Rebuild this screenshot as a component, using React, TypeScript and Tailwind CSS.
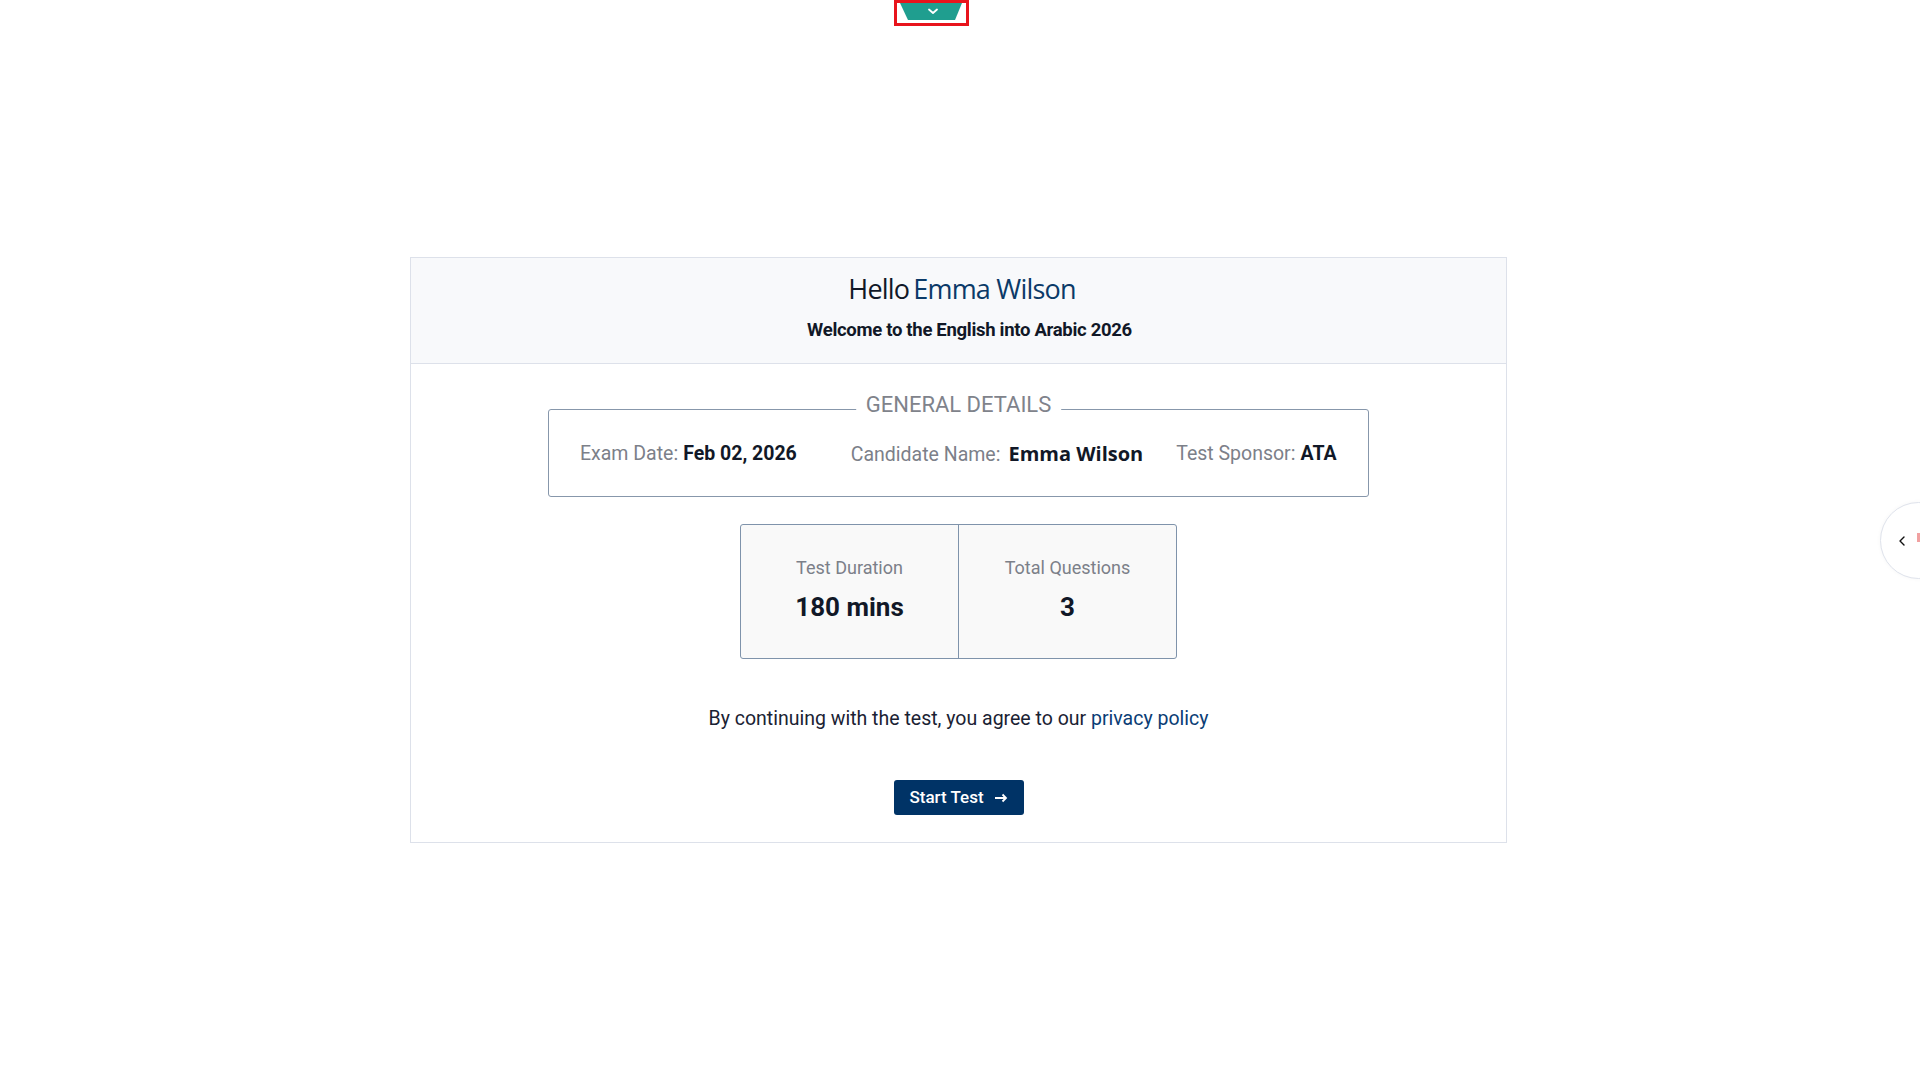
import React from "react";

export default function App() {
  return (
    <div className="relative min-h-[1077px] w-full bg-white" style={{ fontFamily: "Roboto, 'Liberation Sans', sans-serif" }}>
      {/* Top pull tab */}
      <div className="absolute left-[894px] top-0 h-[26px] w-[75px] border-[3px] border-[#e8141c]">
        <svg width="69" height="20" viewBox="0 0 69 20" className="absolute left-0 top-0">
          <polygon points="3,0 65,0 58,17 11,17" fill="#1f9e8f" />
          <path d="M32 6.5 L36 10 L40 6.5" stroke="#ffffff" strokeWidth="1.8" fill="none" strokeLinecap="round" strokeLinejoin="round" />
        </svg>
      </div>

      {/* Right side circular toggle */}
      <div className="absolute left-[1880px] top-[502px] flex h-[77px] w-[77px] items-center rounded-full border border-[#dfe3ec] bg-white shadow-[0_0_4px_rgba(0,0,0,0.04)]">
        <svg width="12" height="12" viewBox="0 0 12 12" className="ml-[15px]">
          <path d="M8 2 L4 6 L8 10" stroke="#111" strokeWidth="1.4" fill="none" strokeLinecap="round" strokeLinejoin="round" />
        </svg>
      </div>
      <div className="absolute left-[1917px] top-[533px] h-[9px] w-[3px] bg-[#f1a1a1]" />

      <div className="pt-[257px]">
        <div className="ml-[410px] w-[1097px] border border-[#dde1ea] bg-white">
          {/* Header */}
          <div className="flex h-[106px] flex-col items-center border-b border-[#dde1ea] bg-[#f8f9fb] pt-[12px]">
            <div className="ml-[7px] flex items-baseline text-[27px] leading-[38px] tracking-[-0.8px]" style={{ fontFamily: "'Open Sans', 'Noto Sans', sans-serif" }}>
              <span className="text-[#111827]">Hello</span>
              <span className="ml-[4px] text-[#0b3a68]">Emma Wilson</span>
            </div>
            <div className="ml-[22px] mt-[11px] text-[18.5px] font-bold leading-[22px] text-[#111827] tracking-[-0.3px]">
              Welcome to the English into Arabic 2026
            </div>
          </div>

          {/* Body */}
          <div className="flex flex-col items-center pb-[27px] pt-[45px]">
            <div className="relative flex h-[88px] w-[821px] items-center rounded-[3px] border border-[#8797ab] pl-[31px] pt-[2px]">
              <span className="absolute left-1/2 top-[-18px] -translate-x-1/2 bg-white px-[10px] text-[22px] leading-[26px] text-[#7f838b]">
                GENERAL DETAILS
              </span>
              <div className="flex items-baseline text-[19.5px] leading-[26px]">
                <span className="text-[#7c8089]">Exam Date:</span>
                <span className="ml-[5px] font-bold text-[#111827]">Feb 02, 2026</span>
              </div>
              <div className="ml-[54px] flex items-baseline text-[19.5px] leading-[26px]">
                <span className="text-[#7c8089]">Candidate Name:</span>
                <span className="ml-[8px] text-[20px] font-bold text-[#111827]" style={{ fontFamily: "'Open Sans', 'Noto Sans', sans-serif" }}>Emma Wilson</span>
              </div>
              <div className="ml-[33px] flex items-baseline text-[19.5px] leading-[26px]">
                <span className="text-[#7c8089]">Test Sponsor:</span>
                <span className="ml-[5px] font-bold text-[#111827]">ATA</span>
              </div>
            </div>

            <div className="mt-[27px] flex h-[135px] w-[437px] rounded-[3px] border border-[#7f93ab] bg-[#f9f9f9]">
              <div className="flex w-[218px] flex-col items-center border-r border-[#7f93ab] pt-[31px]">
                <span className="text-[18px] leading-[24px] text-[#7c8089]">Test Duration</span>
                <span className="mt-[11px] text-[26px] font-bold leading-[32px] text-[#111827]">180 mins</span>
              </div>
              <div className="flex flex-1 flex-col items-center pt-[31px]">
                <span className="text-[18px] leading-[24px] text-[#7c8089]">Total Questions</span>
                <span className="mt-[11px] text-[26px] font-bold leading-[32px] text-[#111827]">3</span>
              </div>
            </div>

            <p className="mt-[47px] text-[19.5px] leading-[26px] text-[#1a2233]">
              By continuing with the test, you agree to our <span className="text-[#0a3d75]">privacy policy</span>
            </p>

            <button className="mt-[48px] flex h-[35px] w-[130px] items-center justify-center gap-[10px] rounded-[3px] bg-[#003366] text-[17px] font-medium text-white">
              <span>Start Test</span>
              <svg width="14" height="10" viewBox="0 0 14 10">
                <path d="M1 5 H12 M8.5 1.5 L12 5 L8.5 8.5" stroke="#fff" strokeWidth="1.8" fill="none" />
              </svg>
            </button>
          </div>
        </div>
      </div>
    </div>
  );
}
